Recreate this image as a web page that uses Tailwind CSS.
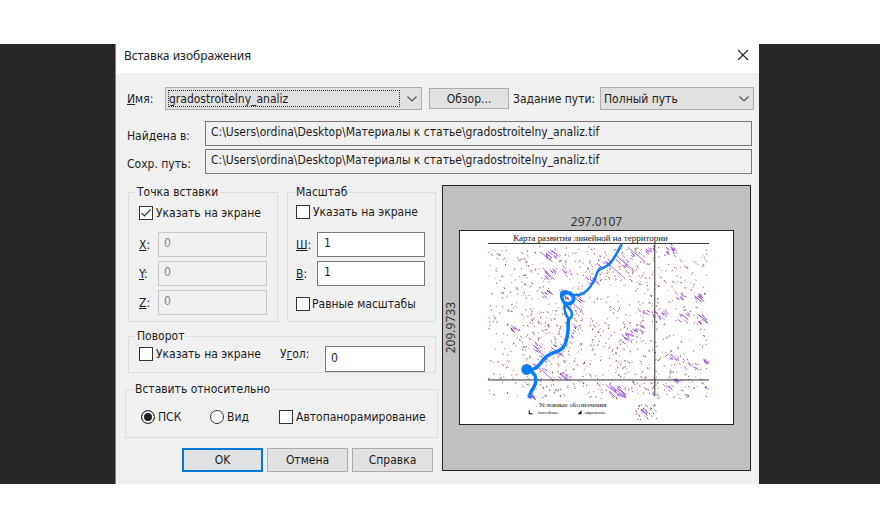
<!doctype html>
<html lang="ru">

<head>
  <meta charset="utf-8">
  <meta name="viewport" content="width=device-width, initial-scale=1">
  <title>Вставка изображения</title>
  <script src="https://cdn.jsdelivr.net/npm/@tailwindcss/browser@4"></script>
</head>

<body class="min-h-screen bg-white py-11 font-['DejaVu_Sans_Condensed','DejaVu_Sans',sans-serif] text-xs leading-4 text-[#1c1c1c]">

<main class="grid grid-cols-[115fr_644fr_121fr] bg-[#262626]">
  <section class="col-start-2 border-l border-[#808080] bg-[#f0f0f0]" role="dialog" aria-labelledby="dialogTitle">
    <header class="flex h-[29px] items-center justify-between bg-white pr-1.5 pl-2">
      <h1 id="dialogTitle" class="pb-1.5 font-['Noto_Sans',sans-serif] text-xs">Вставка изображения</h1>
      <button type="button" aria-label="Закрыть" class="p-1 pb-3">
        <svg class="h-3 w-3" viewBox="0 0 12 12" fill="none" stroke="#222" stroke-width="1.1"><path d="M1 1l10 10M11 1L1 11" /></svg>
      </button>
    </header>

    <form class="pt-3.5 pb-3">
      <div class="flex items-center pr-[5px] pl-[11px]">
        <label for="imageName" class="w-[38px]"><u>И</u>мя:</label>
        <div class="grid flex-1 items-center">
          <select id="imageName" class="col-start-1 row-start-1 h-[23px] w-full appearance-none border border-[#adadad] bg-[#e1e1e1] pl-[3px]">
            <option>gradostroitelny_analiz</option>
          </select>
          <span class="pointer-events-none col-start-1 row-start-1 mr-[22px] ml-[3px] h-[17px] border border-dotted border-[#333]"></span>
          <svg class="pointer-events-none col-start-1 row-start-1 mr-1 h-2 w-3 justify-self-end" viewBox="0 0 12 8" fill="none" stroke="#555" stroke-width="1.2"><path d="M1.5 1.5L6 6l4.500-4.500" /></svg>
        </div>
        <button type="button" class="ml-[7px] h-[21px] w-20 border border-[#adadad] bg-[#e1e1e1]">Обзор...</button>
        <label for="pathType" class="ml-1 w-[87px] whitespace-nowrap">Задание пути:</label>
        <div class="grid w-[154px] items-center">
          <select id="pathType" class="col-start-1 row-start-1 h-[23px] w-full appearance-none border border-[#adadad] bg-[#e1e1e1] pl-[3px]">
            <option>Полный путь</option>
          </select>
          <svg class="pointer-events-none col-start-1 row-start-1 mr-1 h-2 w-3 justify-self-end" viewBox="0 0 12 8" fill="none" stroke="#555" stroke-width="1.2"><path d="M1.5 1.5L6 6l4.500-4.500" /></svg>
        </div>
      </div>

      <div class="mt-[11px] grid grid-cols-[78px_1fr] items-center gap-y-[3px] pr-[7px] pl-[11px]">
        <label for="foundIn" class="pt-1">Найдена в:</label>
        <input id="foundIn" readonly value="C:\Users\ordina\Desktop\Материалы к статье\gradostroitelny_analiz.tif" class="h-[25px] border border-[#7a7a7a] bg-[#f0f0f0] px-[5px] pb-1">
        <label for="savedPath" class="pt-1">Сохр. путь:</label>
        <input id="savedPath" readonly value="C:\Users\ordina\Desktop\Материалы к статье\gradostroitelny_analiz.tif" class="h-[25px] border border-[#7a7a7a] bg-[#f0f0f0] px-[5px] pb-1">
      </div>

      <div class="mt-2.5 flex items-start pr-2">
        <div class="w-[326px] shrink-0 pr-1 pl-[9px]">
          <div class="grid grid-cols-[150px_1fr] gap-x-[9px] pr-0.5 pl-[3px]">
            <fieldset class="border border-[#dcdcdc] px-2.5 pb-1.5">
              <legend class="-ml-1 px-0.5">Точка вставки</legend>
              <label class="mt-[5px] flex items-center gap-[3px] whitespace-nowrap">
                <span class="grid shrink-0">
                  <input type="checkbox" checked class="col-start-1 row-start-1 h-3.5 w-3.5 appearance-none border border-[#333] bg-white">
                  <svg class="pointer-events-none col-start-1 row-start-1 h-3.5 w-3.5" viewBox="0 0 14 14" fill="none" stroke="#333" stroke-width="1.2"><path d="M2.500 7l3 3 6-6.500" /></svg>
                </span>
                Указать на экране
              </label>
              <div class="mt-[11px] grid grid-cols-[19px_1fr] items-center gap-y-1">
                <label for="pointX"><u>X</u>:</label>
                <input id="pointX" disabled value="0" class="h-[25px] w-full border border-[#c8c8c8] bg-[#f0f0f0] px-[5px] pb-1 text-[#858585]">
                <label for="pointY"><u>Y</u>:</label>
                <input id="pointY" disabled value="0" class="h-[25px] w-full border border-[#c8c8c8] bg-[#f0f0f0] px-[5px] pb-1 text-[#858585]">
                <label for="pointZ"><u>Z</u>:</label>
                <input id="pointZ" disabled value="0" class="h-[25px] w-full border border-[#c8c8c8] bg-[#f0f0f0] px-[5px] pb-1 text-[#858585]">
              </div>
            </fieldset>
            <fieldset class="border border-[#dcdcdc] pr-2.5 pl-2">
              <legend class="-ml-0.5 px-0.5">Масштаб</legend>
              <label class="mt-1 flex items-center gap-[3px] whitespace-nowrap">
                <input type="checkbox" class="h-3.5 w-3.5 shrink-0 appearance-none border border-[#333] bg-white">
                Указать на экране
              </label>
              <div class="mt-3 grid grid-cols-[21px_1fr] items-center gap-y-1">
                <label for="scaleW"><u>Ш</u>:</label>
                <input id="scaleW" value="1" class="h-[25px] w-full border border-[#7a7a7a] bg-white px-[6px] pb-1">
                <label for="scaleH"><u>В</u>:</label>
                <input id="scaleH" value="1" class="h-[25px] w-full border border-[#7a7a7a] bg-white px-[6px] pb-1">
              </div>
              <label class="mt-2.5 flex items-center gap-0.5 whitespace-nowrap">
                <input type="checkbox" class="h-3.5 w-3.5 shrink-0 appearance-none border border-[#333] bg-white">
                Равные масштабы
              </label>
            </fieldset>
          </div>

          <fieldset class="mt-1.5 mr-0.5 ml-[3px] border border-[#dcdcdc] pr-2.5 pl-2.5">
            <legend class="-ml-1 px-0.5">Поворот</legend>
            <div class="mt-0.5 flex">
              <label class="flex h-4 items-center gap-[3px] whitespace-nowrap">
                <input type="checkbox" class="h-3.5 w-3.5 shrink-0 appearance-none border border-[#333] bg-white">
                Указать на экране
              </label>
              <label for="angle" class="ml-auto w-[45px]">У<u>г</u>ол:</label>
              <input id="angle" value="0" class="h-[26px] w-[100px] border border-[#7a7a7a] bg-white px-[5px] pb-0.5">
            </div>
          </fieldset>

          <fieldset class="mt-2 border border-[#dcdcdc] pb-3 pl-[15px]">
            <legend class="-ml-2 px-0.5">Вставить относительно</legend>
            <div class="mt-3 flex items-center whitespace-nowrap">
              <label class="flex w-[69px] items-center gap-[3px]">
                <input type="radio" name="relative" checked class="h-3.5 w-3.5 appearance-none rounded-full border border-[#333] bg-[#222] shadow-[inset_0_0_0_2px_white]">
                ПСК
              </label>
              <label class="flex w-[69px] items-center gap-[3px]">
                <input type="radio" name="relative" class="h-3.5 w-3.5 appearance-none rounded-full border border-[#333] bg-white">
                Вид
              </label>
              <label class="flex items-center gap-[3px]">
                <input type="checkbox" class="h-3.5 w-3.5 shrink-0 appearance-none border border-[#333] bg-white">
                Автопанорамирование
              </label>
            </div>
          </fieldset>

          <div class="mt-2.5 flex justify-end gap-1 pr-[5px]">
            <button type="submit" class="h-6 w-[81px] border-2 border-[#0078d7] bg-[#e1e1e1]">OK</button>
            <button type="button" class="h-6 w-[81px] border border-[#adadad] bg-[#e1e1e1]">Отмена</button>
            <button type="button" class="h-6 w-[81px] border border-[#adadad] bg-[#e1e1e1]">Справка</button>
          </div>
        </div>

        <div class="mt-px grid flex-1 grid-cols-[16px_1fr] border border-[#222] bg-[#c0c0c0] pt-7 pr-4 pb-[45px] font-['Noto_Sans',sans-serif] text-xs text-[#333]">
          <div class="col-start-2 text-center">297.0107</div>
          <div class="rotate-180 self-center justify-self-center [writing-mode:vertical-rl]">209.9733</div>
          <svg id="map" class="w-full border border-[#222] bg-white" viewBox="0 0 274 194" fill="none">
            <text x="131" y="10" text-anchor="middle" font-family="Liberation Serif" font-size="9" fill="#112">Карта развития линейной на территории</text>
            <g id="marks"></g>
            <path stroke="#333" d="M28 12.500H250M28 149.500H250M195.500 12V166" />
            <!-- river -->
            <g stroke="#0a7cf5" stroke-linecap="round" stroke-linejoin="round">
              <path stroke-width="2.500" d="M162 14C158 20 156 27 150 33S140 36 138 41S135 52 128 59S117 64 113 64" />
              <path stroke-width="3.500" d="M113 65C107 60 101 59 102 66C103 71 105 73 108 73C113 73 116 69 113 65C111 61 106 61 103 64" />
              <path stroke-width="2.500" d="M105 73C104 80 107 87 110 88C114 85 113 80 107 75" />
              <path stroke-width="3.500" d="M109 88C108 94 109 98 108 103C107 109 107 112 104 116C101 121 95 121 90 124C83 127 82 133 77 137L70 140C76 144 76 146 76 151C76 157 70 160 70 166" />
              <ellipse cx="67" cy="139" rx="4" ry="4" fill="#0a7cf5" stroke-width="3" />
            </g>
            <text x="113" y="177" text-anchor="middle" font-family="Liberation Serif" font-size="7" fill="#222">Условные обозначения</text>
            <path fill="#112" d="M69 180h1v3h3v1h-4zM122 180v4h-4z" />
            <text x="78" y="184" font-family="Liberation Serif" font-size="5" fill="#222">линейные</text>
            <text x="125" y="184" font-family="Liberation Serif" font-size="5" fill="#222">овражные</text>
          </svg>
        </div>
      </div>
    </form>
  </section>
</main>

<script>
  // fixed seed so the map is the same on every load
  let seed = 41;
  const rnd = () => (seed = (seed * 16807) % 2147483647) / 2147483647;
  const paths = {'#a06c62': '', '#6b3a38': '', '#7a20d0': '', '#a855f0': ''};

  // small brown contour marks
  for (let i = 0; i < 1250; i++) {
    const x = 28 + rnd() * 220;
    const y = 15 + rnd() * 153;
    // the far ends of the sheet are sparser
    if ((x < 60 || x > 200) && rnd() > 0.6) continue;
    if (x > 125 && x < 175 && y > 50 && y < 90 && rnd() > 0.4) continue;
    const dx = (rnd() * 3 - 1.5).toFixed(1);
    paths[rnd() > 0.6 ? '#6b3a38' : '#a06c62'] += `M${x.toFixed(1)} ${y.toFixed(1)}l${dx} ${(rnd() * 1.4 + 0.5).toFixed(1)}`;
  }

  // purple hatching: x, y, spread, count
  const clusters = [
    [91, 22, 7, 14], [91, 41, 8, 12], [107, 40, 6, 10], [132, 47, 8, 16], [144, 30, 8, 10], [165, 28, 12, 14],
    [190, 17, 7, 12], [210, 17, 8, 12], [221, 65, 5, 10], [239, 66, 6, 12], [184, 81, 5, 6], [200, 84, 9, 16],
    [223, 85, 7, 10], [243, 87, 6, 12], [178, 97, 6, 12], [167, 101, 6, 10], [116, 66, 8, 12], [53, 97, 4, 9],
    [112, 96, 7, 14], [108, 108, 6, 12], [96, 118, 10, 16], [74, 116, 8, 8], [80, 133, 9, 10], [103, 145, 6, 9],
    [157, 160, 9, 24], [168, 107, 7, 10], [215, 125, 6, 10], [230, 132, 8, 10], [246, 130, 4, 10], [217, 149, 4, 9],
    [208, 157, 6, 10], [195, 163, 4, 5], [70, 166, 4, 12], [184, 181, 4, 8], [85, 63, 6, 9], [247, 158, 3, 4]
  ];
  for (const [cx, cy, r, n] of clusters) {
    for (let i = 0; i < n; i++) {
      const x = cx + (rnd() - 0.5) * 1.6 * r;
      const y = cy + (rnd() - 0.5) * 1.2 * r;
      const len = 0.6 + rnd() * 3;
      paths[rnd() > 0.5 ? '#7a20d0' : '#a855f0'] += `M${x.toFixed(1)} ${y.toFixed(1)}l${len.toFixed(1)} ${(len * 0.9).toFixed(1)}`;
    }
  }
  paths['#a855f0'] += 'M147 31l19 17M156 24l19 16M168 16l18 15M73 114l17 17M75 134l19 16M103 64l20 17M80 21l13 10M83 37l12 12M146 154l17 13M150 154l16 13';

  // compass mark under the sheet
  for (let i = 0; i < 34; i++) {
    paths['#6b3a38'] += `M${(176 + rnd() * 22).toFixed(1)} ${(174 + rnd() * 15).toFixed(1)}l1.200 .5`;
  }

  document.getElementById('marks').innerHTML = Object.entries(paths)
    .map(([color, d]) => `<path stroke="${color}" stroke-width=".9" d="${d}"/>`)
    .join('');
</script>
</body>

</html>
